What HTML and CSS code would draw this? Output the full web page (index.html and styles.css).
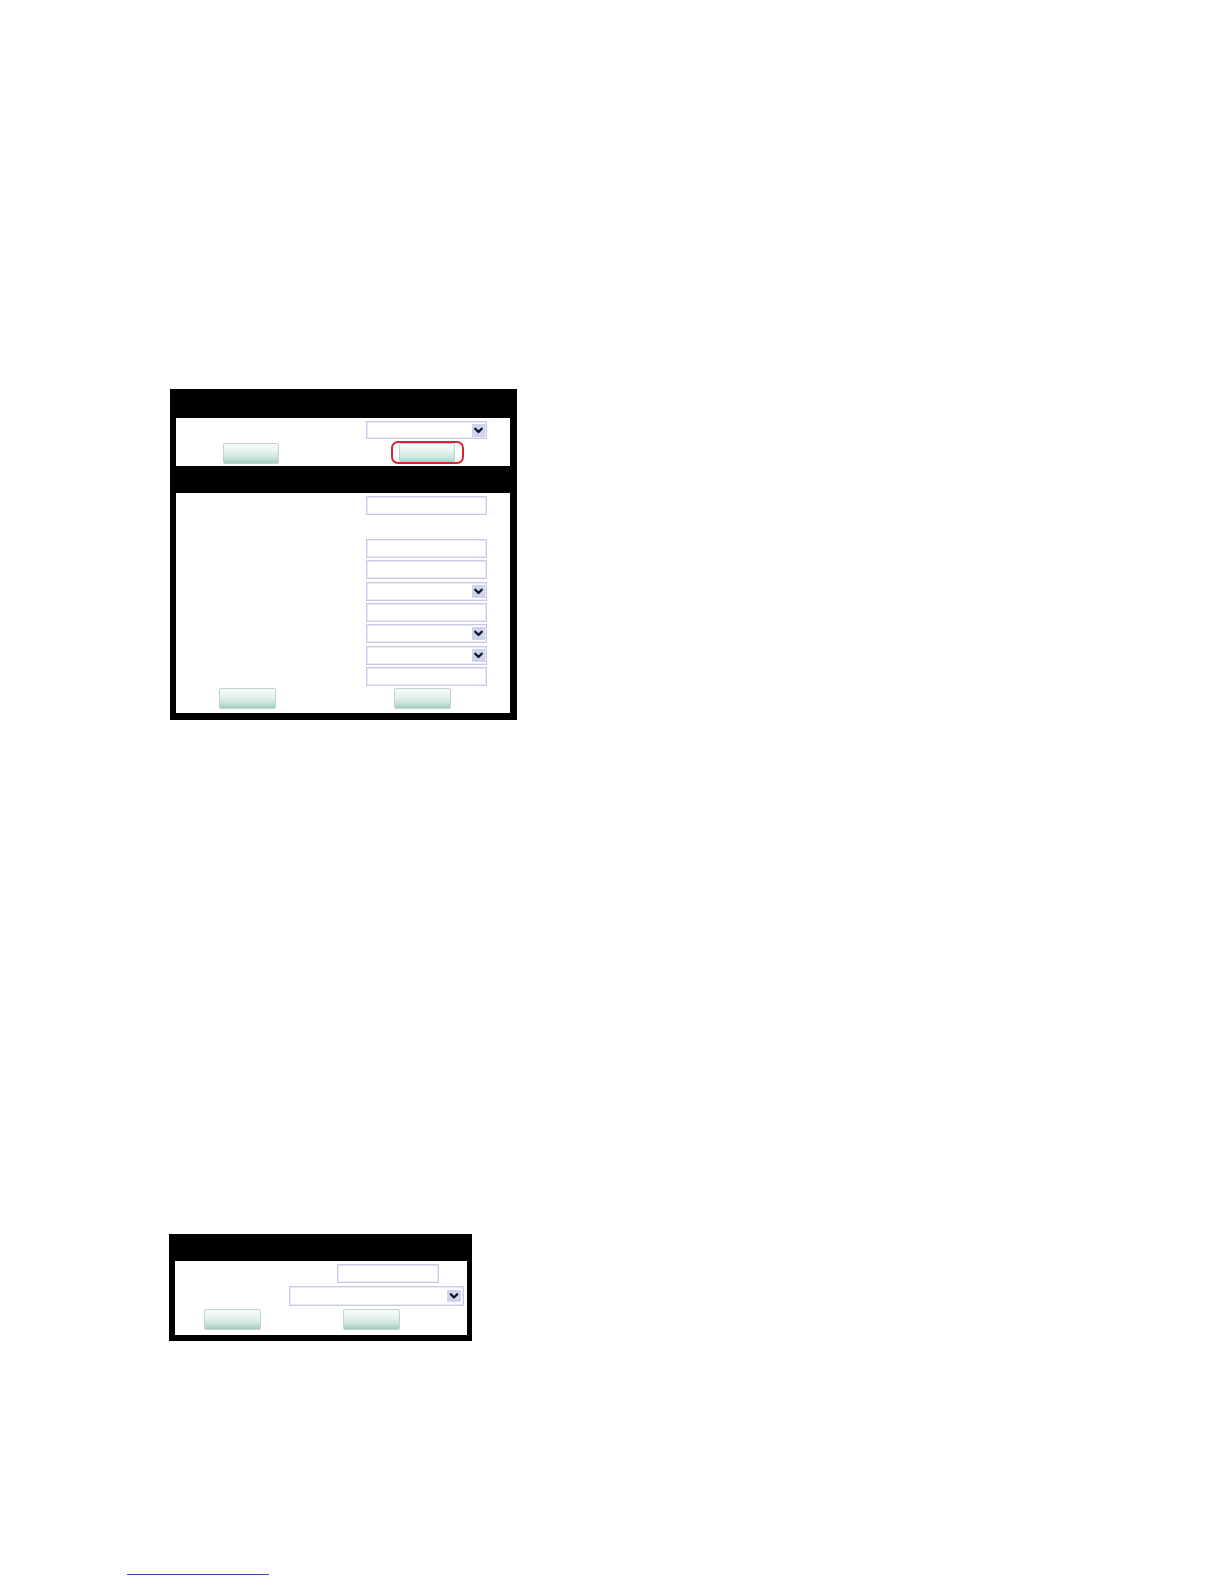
FILE: index.html
```html
<!DOCTYPE html>
<html lang="en">
<head>
<meta charset="utf-8">
<title>Settings panels</title>
<link rel="stylesheet" href="styles.css">
</head>
<body>
<div class="page">
  <section class="panel panel-main">
    <div class="bar bar-tall"></div>
    <div class="sheet sheet-top">
      <div class="field-row">
        <span class="label"></span>
        <div class="select sel-main"><span class="arrow"><svg viewBox="0 0 13 13" width="13" height="13"><path d="M3.3 4.8 L6.5 8 L9.7 4.8" fill="none" stroke="#10122a" stroke-width="2.3" stroke-linecap="round" stroke-linejoin="round"/></svg></span></div>
      </div>
      <div class="btn-row btn-row-top">
        <button class="btn" type="button"></button>
        <span class="highlight"><button class="btn" type="button"></button></span>
      </div>
    </div>
    <div class="bar"></div>
    <div class="sheet sheet-form">
      <div class="form-grid">
        <div class="input"></div>
        <div class="spacer"></div>
        <div class="input"></div>
        <div class="input"></div>
        <div class="select"><span class="arrow"><svg viewBox="0 0 13 13" width="13" height="13"><path d="M3.3 4.8 L6.5 8 L9.7 4.8" fill="none" stroke="#10122a" stroke-width="2.3" stroke-linecap="round" stroke-linejoin="round"/></svg></span></div>
        <div class="input"></div>
        <div class="select"><span class="arrow"><svg viewBox="0 0 13 13" width="13" height="13"><path d="M3.3 4.8 L6.5 8 L9.7 4.8" fill="none" stroke="#10122a" stroke-width="2.3" stroke-linecap="round" stroke-linejoin="round"/></svg></span></div>
        <div class="select"><span class="arrow"><svg viewBox="0 0 13 13" width="13" height="13"><path d="M3.3 4.8 L6.5 8 L9.7 4.8" fill="none" stroke="#10122a" stroke-width="2.3" stroke-linecap="round" stroke-linejoin="round"/></svg></span></div>
        <div class="input"></div>
      </div>
      <div class="btn-row btn-row-form">
        <button class="btn btn-wide" type="button"></button>
        <button class="btn btn-wide" type="button"></button>
      </div>
    </div>
  </section>

  <section class="panel panel-small">
    <div class="bar"></div>
    <div class="sheet sheet-small">
      <div class="input input-small"></div>
      <div class="select select-small"><span class="arrow arrow-small"><svg viewBox="0 0 14 12" width="14" height="12"><path d="M3.8 4.3 L7 7.5 L10.2 4.3" fill="none" stroke="#10122a" stroke-width="2.3" stroke-linecap="round" stroke-linejoin="round"/></svg></span></div>
      <div class="btn-row btn-row-small">
        <button class="btn btn-wide" type="button"></button>
        <button class="btn btn-wide" type="button"></button>
      </div>
    </div>
  </section>

  <div class="footnote-rule"></div>
</div>
</body>
</html>
```

FILE: styles.css
```css
html, body {
  margin: 0;
  padding: 0;
  background: #ffffff;
  font-family: "Liberation Sans", Arial, sans-serif;
}

.page {
  width: 1224px;
  min-height: 1584px;
  padding-top: 389px;
  box-sizing: border-box;
}

.panel {
  background: #000000;
  display: flex;
  flex-direction: column;
}

.panel-main {
  margin-left: 170px;
  width: 347px;
  padding: 0 7px 7px 6px;
  box-sizing: border-box;
}

.panel-small {
  margin-left: 169px;
  margin-top: 514px;
  width: 303px;
  padding: 0 5px 6px 6px;
  box-sizing: border-box;
}

.bar {
  height: 27px;
}

.bar-tall {
  height: 29px;
}

.sheet {
  background: #ffffff;
  display: flex;
  flex-direction: column;
}

.sheet-top {
  height: 48px;
  padding-top: 3px;
  box-sizing: border-box;
}

.field-row {
  display: flex;
  height: 18px;
}

.label {
  width: 190px;
  flex: none;
}

.input,
.select {
  box-sizing: border-box;
  background: #ffffff;
  border: 1px solid #c7c9e6;
  box-shadow: inset 0 0 0 1px #e9eaf5;
}

.select {
  display: flex;
  justify-content: flex-end;
  align-items: center;
  padding-right: 1px;
}

.sel-main {
  width: 121px;
  height: 18px;
}

.arrow {
  width: 13px;
  height: 13px;
  background: #cfd3ee;
  display: flex;
  align-items: center;
  justify-content: center;
}

.arrow svg {
  display: block;
}

.arrow-small {
  width: 14px;
  height: 12px;
}

.btn {
  display: block;
  margin: 0;
  padding: 0;
  width: 56px;
  height: 21px;
  box-sizing: border-box;
  border: 1px solid #c3d3cf;
  border-radius: 2px;
  background: linear-gradient(to bottom, #f7fcfb 0%, #e9f4f1 35%, #cde5df 70%, #a2ccc1 100%);
  cursor: pointer;
}

.btn-wide {
  width: 57px;
}

.btn-row {
  display: flex;
}

.btn-row-top {
  margin-top: 4px;
  padding-left: 47px;
  gap: 120px;
}

.highlight {
  position: relative;
  display: block;
}

.highlight::after {
  content: "";
  position: absolute;
  left: -8px;
  right: -9px;
  top: -2px;
  bottom: 0;
  border: 2px solid #d8262f;
  border-radius: 7px;
  pointer-events: none;
}

.sheet-form {
  height: 220px;
  padding-top: 3px;
  box-sizing: border-box;
}

.form-grid {
  display: grid;
  grid-template-columns: 121px;
  grid-auto-rows: 19px;
  row-gap: 2.375px;
  padding-left: 190px;
}

.btn-row-form {
  margin-top: 2.4px;
  padding-left: 43px;
  gap: 118px;
}

.sheet-small {
  height: 74px;
  padding-top: 3px;
  box-sizing: border-box;
}

.input-small {
  width: 102px;
  height: 19px;
  margin-left: 162px;
}

.select-small {
  width: 175px;
  height: 20px;
  margin-left: 114px;
  margin-top: 3px;
  padding-right: 2px;
}

.btn-row-small {
  margin-top: 3px;
  padding-left: 29px;
  gap: 82px;
}

.footnote-rule {
  margin-top: 233px;
  margin-left: 127px;
  width: 142px;
  height: 1px;
  background: #3a4cae;
}
```
